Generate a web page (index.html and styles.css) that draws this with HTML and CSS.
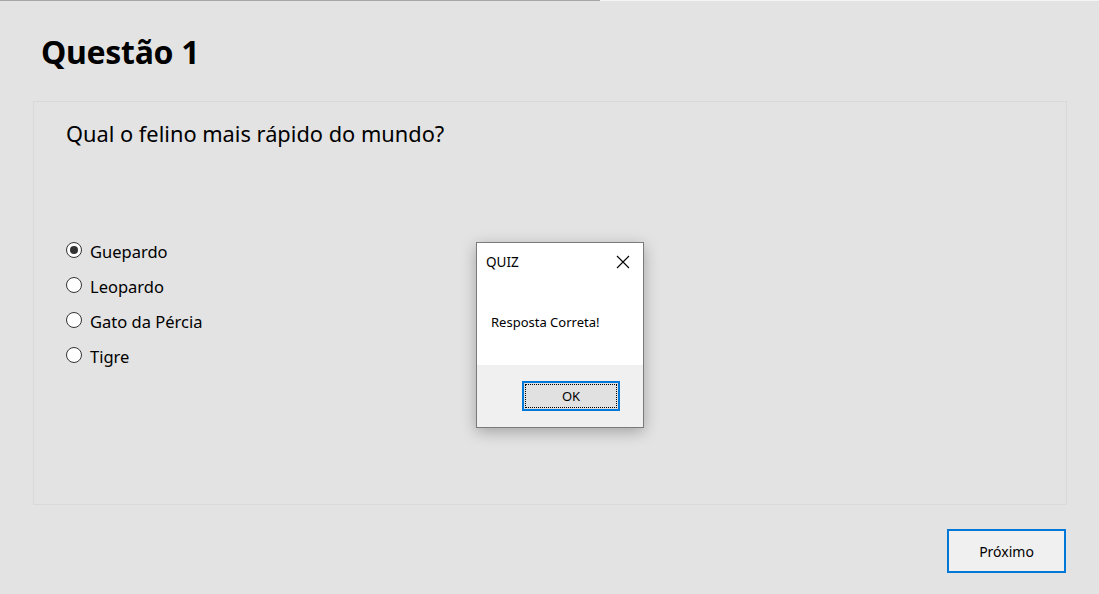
FILE: index.html
```html
<!DOCTYPE html>
<html lang="pt">
<head>
<meta charset="utf-8">
<link rel="stylesheet" href="styles.css">
</head>
<body>
<div class="topstrip"><div class="strip-left"></div><div class="strip-right"></div></div>
<main class="page">
  <h1 class="title">Questão 1</h1>
  <section class="panel">
    <p class="question">Qual o felino mais rápido do mundo?</p>
    <ul class="options">
      <li class="option"><span class="radio checked"></span>Guepardo</li>
      <li class="option"><span class="radio"></span>Leopardo</li>
      <li class="option"><span class="radio"></span>Gato da Pércia</li>
      <li class="option"><span class="radio"></span>Tigre</li>
    </ul>
  </section>
  <div class="footer">
    <button class="next">Próximo</button>
  </div>
</main>
<div class="dialog">
  <div class="dlg-title"><span>QUIZ</span>
    <svg class="close" width="14" height="14" viewBox="0 0 14 14"><path d="M1 1L13 13M13 1L1 13" stroke="#000" stroke-width="1.1" fill="none"/></svg>
  </div>
  <div class="dlg-body">Resposta Correta!</div>
  <div class="dlg-foot"><button class="ok"><span class="focus">OK</span></button></div>
</div>
</body>
</html>
```
FILE: styles.css
```css
html, body { margin: 0; padding: 0; }
body {
  background: #e3e3e3;
  width: 1099px;
  height: 594px;
  overflow: hidden;
  font-family: "Noto Sans", "Open Sans", sans-serif;
  color: #000;
  position: relative;
}
.topstrip { display: flex; height: 1px; }
.strip-left { width: 600px; background: #a6a6a6; }
.strip-right { flex: 1; background: #f4f4f4; }
.page { padding: 0 32px 0 33px; }
.title {
  margin: 0;
  padding: 31px 0 0 8px;
  height: 69px;
  box-sizing: border-box;
  font-size: 32px;
  font-weight: 700;
  line-height: 40px;
  letter-spacing: -0.3px;
}
.panel {
  margin-top: 31px;
  height: 404px;
  box-sizing: border-box;
  border: 1px solid #d9d9d9;
  padding: 17px 0 0 32px;
}
.question {
  margin: 0;
  font-size: 21.8px;
  line-height: 30px;
}
.options {
  list-style: none;
  margin: 90px 0 0 0;
  padding: 0;
  display: flex;
  flex-direction: column;
  gap: 11px;
}
.option {
  display: flex;
  align-items: center;
  height: 24px;
  font-size: 16.5px;
  gap: 8px;
}
.radio {
  width: 14px;
  height: 14px;
  border: 1px solid #333;
  border-radius: 50%;
  background: #fff;
  box-sizing: content-box;
  position: relative;
  margin-top: -2px;
}
.radio.checked::after {
  content: "";
  position: absolute;
  left: 3px; top: 3px;
  width: 8px; height: 8px;
  border-radius: 50%;
  background: #333;
}
.footer {
  display: flex;
  justify-content: flex-end;
  padding-top: 24px;
}
.next {
  width: 119px;
  height: 44px;
  border: 2px solid #0078d7;
  background: #f0f0f0;
  font-family: "Noto Sans", sans-serif;
  font-size: 14px;
  color: #000;
  padding: 0;
  margin-right: 1px;
}
.dialog {
  position: absolute;
  left: 476px;
  top: 242px;
  width: 166px;
  height: 184px;
  border: 1px solid #7a7a7a;
  background: #fff;
  box-shadow: 0 4px 14px rgba(0,0,0,0.28);
  display: flex;
  flex-direction: column;
}
.dlg-title {
  display: flex;
  justify-content: space-between;
  align-items: center;
  height: 38px;
  padding: 0 13px 0 9px;
  font-size: 13.5px;
}
.close { display: block; }
.dlg-body {
  height: 84px;
  box-sizing: border-box;
  padding: 32px 0 0 14px;
  font-size: 13px;
}
.dlg-foot {
  flex: 1;
  background: #f0f0f0;
  display: flex;
  justify-content: flex-end;
  align-items: flex-start;
  padding: 16px 23px 0 0;
}
.ok {
  width: 98px;
  height: 30px;
  border: 2px solid #0078d7;
  background: #e1e1e1;
  padding: 1px;
  font-family: "Noto Sans", sans-serif;
  font-size: 13px;
  color: #000;
  display: flex;
}
.focus {
  flex: 1;
  border: 1px dotted #000;
  display: flex;
  align-items: center;
  justify-content: center;
}
```
